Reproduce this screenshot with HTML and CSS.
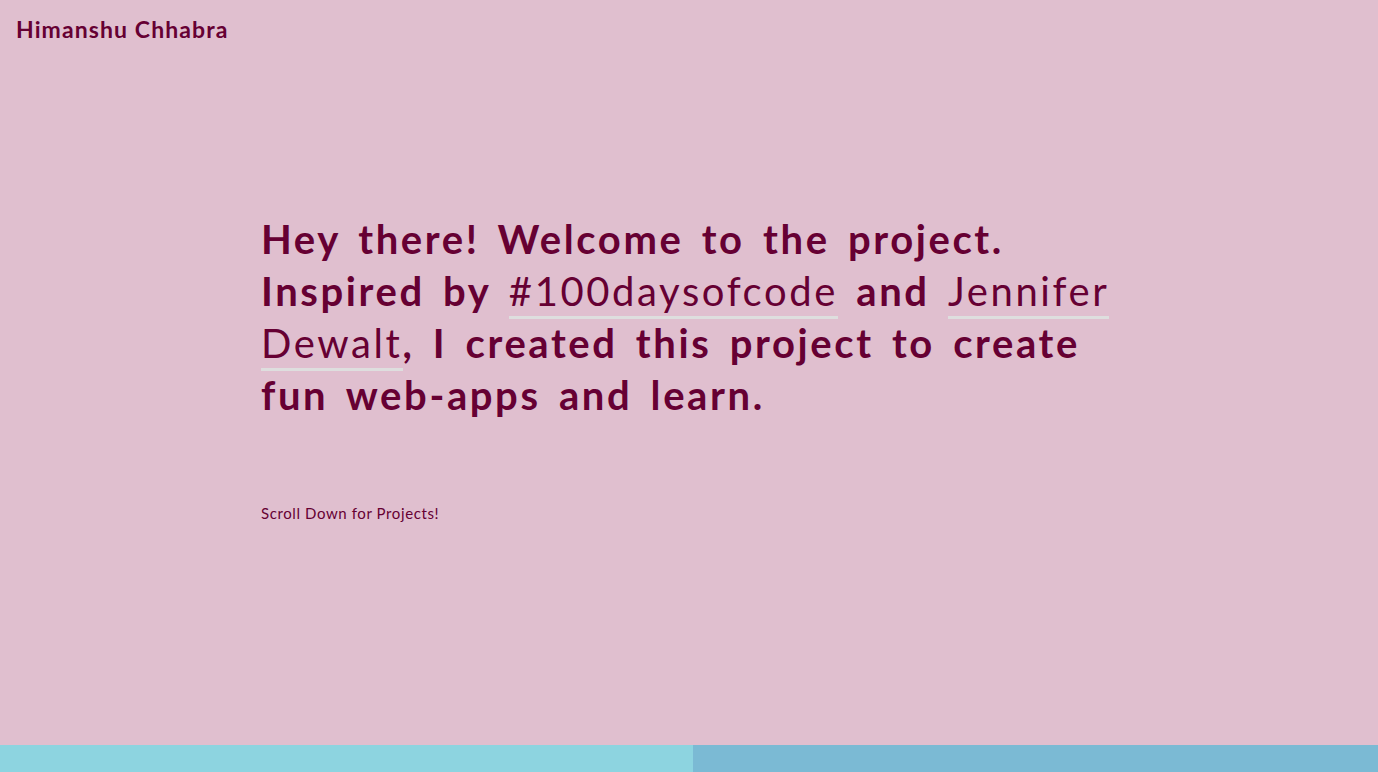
FILE: index.html
```html
<!DOCTYPE html>
<html lang="en">
<head>
<meta charset="utf-8">
<title>Himanshu Chhabra</title>
<link rel="stylesheet" href="styles.css">
</head>
<body>
<div class="page">
  <header class="topbar">
    <a class="brand" href="#">Himanshu Chhabra</a>
  </header>
  <main class="hero">
    <div class="intro">
      <h1 class="headline">Hey there! Welcome to the project. Inspired by <a class="link" href="#">#100daysofcode</a> and <a class="link" href="#">Jennifer Dewalt</a>, I created this project to create fun web-apps and learn.</h1>
      <p class="hint">Scroll Down for Projects!</p>
    </div>
  </main>
  <div class="stripes">
    <div class="stripe stripe-a"></div>
    <div class="stripe stripe-b"></div>
  </div>
</div>
</body>
</html>
```
FILE: styles.css
```css
* { box-sizing: border-box; }
html, body { margin: 0; padding: 0; height: 100%; }
body {
  background: #e0bfcf;
  color: #660033;
  font-family: "Lato", "Open Sans", sans-serif;
  overflow: hidden;
}
.page {
  height: 772px;
  display: flex;
  flex-direction: column;
}
.topbar {
  padding: 15px 16px 0 16px;
  height: 60px;
}
.brand {
  color: #660033;
  text-decoration: none;
  font-size: 23px;
  font-weight: 700;
  letter-spacing: 1.1px;
  line-height: 28px;
}
.hero {
  flex: 1;
  display: flex;
  justify-content: center;
}
.intro {
  width: 856px;
  padding-top: 153px;
}
.headline {
  margin: 0;
  font-size: 40px;
  line-height: 52px;
  font-weight: 700;
  letter-spacing: 2.6px;
  word-spacing: 6px;
}
.link {
  color: #660033;
  font-weight: 400;
  text-decoration: none;
  border-bottom: 3px solid #dedede;
  padding-bottom: 1px;
}
.hint {
  margin: 82px 0 0 0;
  font-size: 15px;
  line-height: 20px;
  letter-spacing: 0.6px;
}
.stripes {
  height: 27px;
  display: flex;
}
.stripe { height: 100%; }
.stripe-a { flex: 0 0 693px; background: #8dd4e0; }
.stripe-b { flex: 1; background: #7bbad4; }
```
